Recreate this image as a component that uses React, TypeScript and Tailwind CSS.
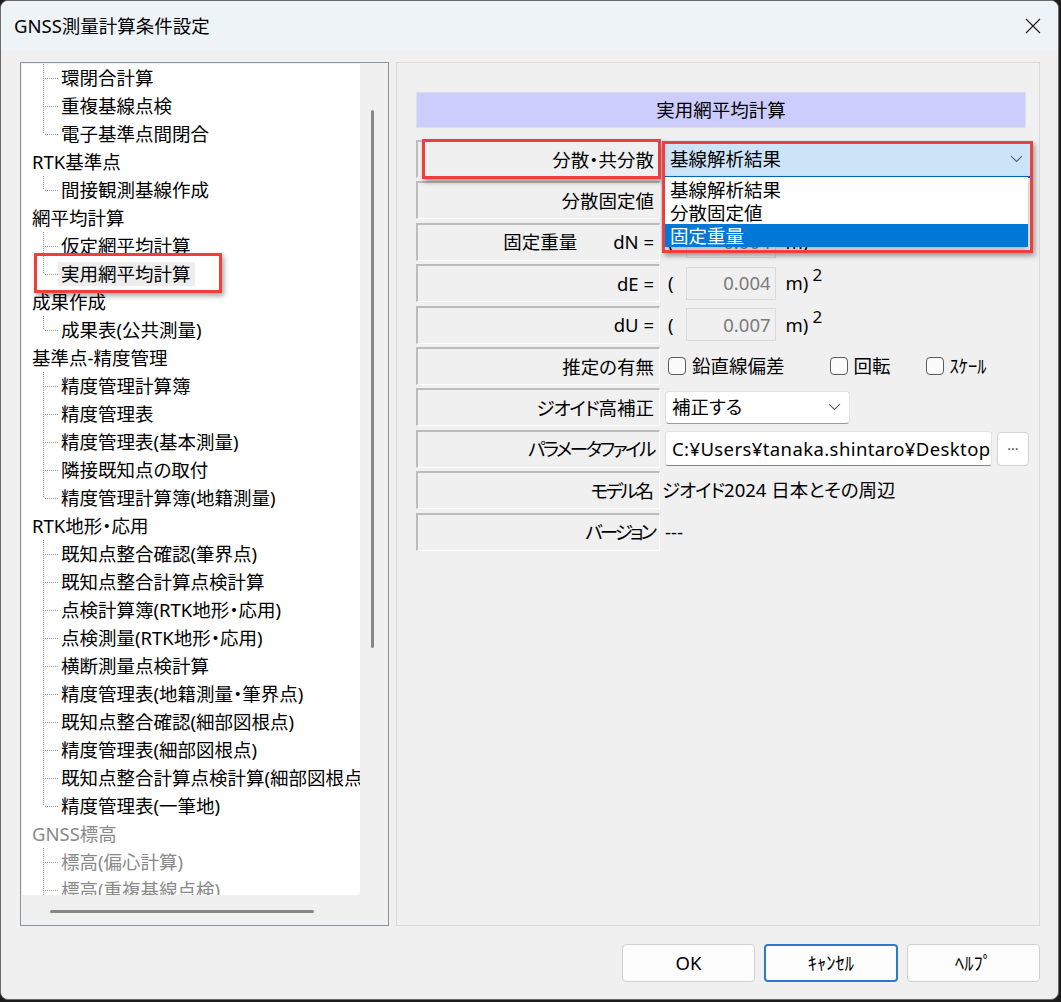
import React from "react";

type Node = { t: string; lv: 0 | 1; last?: boolean; dim?: boolean; sel?: boolean };

const tree: Node[] = [
  { t: "環閉合計算", lv: 1 },
  { t: "重複基線点検", lv: 1 },
  { t: "電子基準点間閉合", lv: 1, last: true },
  { t: "RTK基準点", lv: 0 },
  { t: "間接観測基線作成", lv: 1, last: true },
  { t: "網平均計算", lv: 0 },
  { t: "仮定網平均計算", lv: 1 },
  { t: "実用網平均計算", lv: 1, last: true, sel: true },
  { t: "成果作成", lv: 0 },
  { t: "成果表(公共測量)", lv: 1, last: true },
  { t: "基準点-精度管理", lv: 0 },
  { t: "精度管理計算簿", lv: 1 },
  { t: "精度管理表", lv: 1 },
  { t: "精度管理表(基本測量)", lv: 1 },
  { t: "隣接既知点の取付", lv: 1 },
  { t: "精度管理計算簿(地籍測量)", lv: 1, last: true },
  { t: "RTK地形・応用", lv: 0 },
  { t: "既知点整合確認(筆界点)", lv: 1 },
  { t: "既知点整合計算点検計算", lv: 1 },
  { t: "点検計算簿(RTK地形・応用)", lv: 1 },
  { t: "点検測量(RTK地形・応用)", lv: 1 },
  { t: "横断測量点検計算", lv: 1 },
  { t: "精度管理表(地籍測量・筆界点)", lv: 1 },
  { t: "既知点整合確認(細部図根点)", lv: 1 },
  { t: "精度管理表(細部図根点)", lv: 1 },
  { t: "既知点整合計算点検計算(細部図根点)", lv: 1 },
  { t: "精度管理表(一筆地)", lv: 1, last: true },
  { t: "GNSS標高", lv: 0, dim: true },
  { t: "標高(偏心計算)", lv: 1, dim: true },
  { t: "標高(重複基線点検)", lv: 1, dim: true },
];

function TreeRow({ n }: { n: Node }) {
  const color = n.dim ? "text-[#8a8a8a]" : "text-black";
  if (n.lv === 0) {
    return <div className={`h-[28px] leading-[28px] pl-[10px] whitespace-nowrap ${color}`}>{n.t}</div>;
  }
  return (
    <div className="flex h-[28px] items-center whitespace-nowrap">
      <svg width="36" height="28" className="shrink-0">
        <line x1="21.5" y1="0" x2="21.5" y2={n.last ? 14 : 28} stroke="#9a9a9a" strokeDasharray="1 1" />
        <line x1="23" y1="14.5" x2="36" y2="14.5" stroke="#9a9a9a" strokeDasharray="1 1" />
      </svg>
      <span className={`h-[24px] leading-[24px] pl-[3px] pr-[4px] ${color} ${n.sel ? "bg-[#eeeeee]" : ""}`}>{n.t}</span>
    </div>
  );
}

const Chevron = () => (
  <svg width="13" height="8" viewBox="0 0 13 8" className="shrink-0">
    <path d="M1 1.2 L6.5 6.5 L12 1.2" fill="none" stroke="#5f5f5f" strokeWidth="1.1" />
  </svg>
);

function Label({ children }: { children: React.ReactNode }) {
  return (
    <div className="w-[244px] h-full shrink-0 flex items-center justify-end pr-[5px] border-t-2 border-l-2 border-b border-r border-[#bcbcbc] border-b-white border-r-white">
      {children}
    </div>
  );
}

function Sq({ v }: { v: string }) {
  return (
    <>
      <span className="ml-[6px]">(</span>
      <div className="ml-[12px] w-[90px] h-[33px] border border-[#dadada] bg-[#f0f0f0] flex items-center justify-end pr-[4px] text-[#7b7b7b]">
        {v}
      </div>
      <span className="ml-[10px]">m)</span>
      <span className="ml-[4px] -mt-[16px] text-[17px]">2</span>
    </>
  );
}

function Check({ label, className }: { label: string; className?: string }) {
  return (
    <div className={`flex items-center ${className ?? ""}`}>
      <span className="w-[18px] h-[18px] rounded-[4px] border border-[#5c5c5c] bg-[#fbfbfb]" />
      <span className="ml-[6px]">{label}</span>
    </div>
  );
}

export default function App() {
  return (
    <div className="w-[1061px] h-[1002px] bg-[#1c1c1c] font-['Noto_Sans','Noto_Sans_CJK_JP',sans-serif] [font-feature-settings:'palt'] text-[18.5px] text-black">
      <div className="relative w-[1059px] h-[1000px] rounded-[8px] border border-[#6a6a6a] bg-[#f0f0f0] overflow-hidden flex flex-col">
        {/* title bar */}
        <div className="h-[49px] shrink-0 bg-[#eef3f8] flex items-center justify-between pl-[13px] pr-[17px]">
          <span>GNSS測量計算条件設定</span>
          <svg width="16" height="16" viewBox="0 0 16 16">
            <path d="M1 1 L15 15 M15 1 L1 15" stroke="#1a1a1a" strokeWidth="1.1" />
          </svg>
        </div>

        <div className="flex gap-[7px] pl-[19px] pr-[18px] pt-[12px]">
          {/* tree */}
          <div className="w-[369px] h-[864px] border border-[#8d929a] p-[1px] flex flex-col">
            <div className="flex h-[833px]">
              <div className="w-[338px] h-[831px] bg-white overflow-hidden rounded-br-[4px]">
                {tree.map((n, i) => (
                  <TreeRow key={i} n={n} />
                ))}
              </div>
              <div className="w-[27px] h-full pt-[46px]">
                <div className="ml-[11px] w-[3px] h-[538px] rounded-full bg-[#878787]" />
              </div>
            </div>
            <div className="h-[27px] pt-[13px] pl-[28px]">
              <div className="w-[264px] h-[3px] rounded-full bg-[#878787]" />
            </div>
          </div>

          {/* settings */}
          <div className="w-[644px] h-[864px] border border-[#dadada] pl-[19px] pt-[29px]">
            <div className="w-[610px] h-[36px] bg-[#ccccfd] border border-[#dedeea] flex items-center justify-center">
              実用網平均計算
            </div>
            <div className="mt-[12px] flex flex-col gap-[3.4px]">
              <div className="flex h-[38px] gap-[2px]">
                <Label>分散・共分散</Label>
                <div className="relative mt-[2px] w-[368px] h-[36px] bg-[#cce4f7] border-b-2 border-[#0067c0] flex items-center justify-between pl-[8px] pr-[7px]">
                  <span>基線解析結果</span>
                  <Chevron />
                  <div className="absolute left-[2px] top-[35px] w-[364px] bg-white z-10 pt-[1px] shadow-[0_3px_6px_rgba(0,0,0,0.25)]">
                    <div className="h-[23px] leading-[23px] pl-[6px]">基線解析結果</div>
                    <div className="h-[23px] leading-[23px] pl-[6px]">分散固定値</div>
                    <div className="h-[23px] leading-[23px] pl-[6px] bg-[#0078d7] text-white">固定重量</div>
                  </div>
                </div>
              </div>
              <div className="flex h-[38px] gap-[2px]">
                <Label>分散固定値</Label>
              </div>
              <div className="flex h-[38px] gap-[2px]">
                <Label>
                  <span>固定重量</span>
                  <span className="ml-[36px]">dN =</span>
                </Label>
                <div className="flex items-center">
                  <Sq v="0.004" />
                </div>
              </div>
              <div className="flex h-[38px] gap-[2px]">
                <Label>dE =</Label>
                <div className="flex items-center">
                  <Sq v="0.004" />
                </div>
              </div>
              <div className="flex h-[38px] gap-[2px]">
                <Label>dU =</Label>
                <div className="flex items-center">
                  <Sq v="0.007" />
                </div>
              </div>
              <div className="flex h-[38px] gap-[2px]">
                <Label>推定の有無</Label>
                <div className="flex items-center">
                  <Check label="鉛直線偏差" className="ml-[6px]" />
                  <Check label="回転" className="ml-[45px]" />
                  <Check label="ｽｹｰﾙ" className="ml-[35px]" />
                </div>
              </div>
              <div className="flex h-[38px] gap-[2px]">
                <Label>
                  <span className="tracking-[-1px]">ジオイド</span>高補正
                </Label>
                <div className="flex items-center">
                  <div className="ml-[3px] w-[185px] h-[33px] bg-white border border-[#e2e2e2] border-b-[#9a9a9a] rounded-[4px] flex items-center justify-between pl-[6px] pr-[8px]">
                    <span>補正する</span>
                    <Chevron />
                  </div>
                </div>
              </div>
              <div className="flex h-[38px] gap-[2px]">
                <Label>
                  <span className="tracking-[-2.4px]">パラメータファイル</span>
                </Label>
                <div className="flex items-center">
                  <div className="ml-[3px] w-[327px] h-[35px] bg-white border border-[#e4e4e4] border-b-[#868686] rounded-[3px] overflow-hidden whitespace-nowrap pl-[6px] flex items-center tracking-[0.4px]">
                    C:¥Users¥tanaka.shintaro¥Desktop¥GNSS
                  </div>
                  <div className="ml-[5px] w-[32px] h-[34px] bg-white border border-[#d3d3d3] rounded-[4px] flex items-center justify-center text-[#555] text-[14px]">
                    ···
                  </div>
                </div>
              </div>
              <div className="flex h-[38px] gap-[2px]">
                <Label>
                  <span className="tracking-[-2.5px]">モデル</span>名
                </Label>
                <div className="flex items-center whitespace-nowrap">
                  <span className="tracking-[-1px]">ジオイド</span>2024 日本とその周辺
                </div>
              </div>
              <div className="flex h-[38px] gap-[2px]">
                <Label>
                  <span className="tracking-[-3px]">バージョン</span>
                </Label>
                <div className="flex items-center pl-[3px]">---</div>
              </div>
            </div>
          </div>
        </div>

        {/* buttons */}
        <div className="mt-[18px] flex justify-end gap-[9px] pr-[18px]">
          <button className="w-[133px] h-[38px] bg-[#fdfdfd] border border-[#d0d0d0] rounded-[4px]">OK</button>
          <button className="w-[134px] h-[38px] bg-[#fdfdfd] border-2 border-[#2c7ad0] rounded-[4px]">ｷｬﾝｾﾙ</button>
          <button className="w-[133px] h-[38px] bg-[#fdfdfd] border border-[#d0d0d0] rounded-[4px]">ﾍﾙﾌﾟ</button>
        </div>

        {/* annotation boxes */}
        <div className="absolute left-[33px] top-[252px] w-[188px] h-[40px] border-[3px] border-[#ee3e3e] shadow-[2px_3px_5px_rgba(0,0,0,0.35)] z-20" />
        <div className="absolute left-[421px] top-[138px] w-[239px] h-[40px] border-[3px] border-[#ee3e3e] shadow-[2px_3px_5px_rgba(0,0,0,0.35)] z-20" />
        <div className="absolute left-[661px] top-[140px] w-[371px] h-[112px] border-[3px] border-[#ee3e3e] shadow-[2px_3px_5px_rgba(0,0,0,0.35)] z-20" />
      </div>
    </div>
  );
}
